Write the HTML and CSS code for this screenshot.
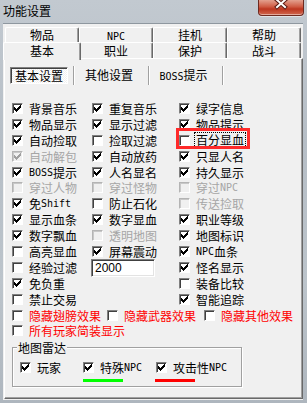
FILE: index.html
```html
<!DOCTYPE html>
<html lang="zh-CN">
<head>
<meta charset="utf-8">
<title>功能设置</title>
<link rel="stylesheet" href="styles.css">
</head>
<body>
<div class="win">
  <div class="titlebar">
    <span class="title">功能设置</span>
    <div class="close">
      <svg width="46" height="16" viewBox="0 0 46 16">
        <path d="M19 1 L27 8 M27 1 L19 8" stroke="#5a1a12" stroke-width="4" stroke-linecap="square" fill="none"/>
        <path d="M19 1 L27 8 M27 1 L19 8" stroke="#ffffff" stroke-width="2" stroke-linecap="square" fill="none"/>
      </svg>
    </div>
  </div>
  <div class="client">
    <div class="tabs">
      <div class="tabrow r1">
        <div class="tab">物品</div>
        <div class="tab"><span class="en">NPC</span></div>
        <div class="tab">挂机</div>
        <div class="tab">帮助</div>
      </div>
      <div class="tabrow r2">
        <div class="tab sel">基本</div>
        <div class="tab">职业</div>
        <div class="tab">保护</div>
        <div class="tab">战斗</div>
      </div>
    </div>
    <div class="panel">
      <div class="subtabs">
        <div class="stab on">基本设置</div><i class="sep"></i>
        <div class="stab w2">其他设置</div><i class="sep"></i>
        <div class="stab w3"><span class="en">BOSS</span>提示</div><i class="sep"></i>
      </div>
      <div class="grid">
        <div class="item on"><span class="box"></span>背景音乐</div>
        <div class="item on"><span class="box"></span>重复音乐</div>
        <div class="item on"><span class="box"></span>绿字信息</div>

        <div class="item on"><span class="box"></span>物品显示</div>
        <div class="item on"><span class="box"></span>显示过滤</div>
        <div class="item on"><span class="box"></span>物品提示</div>

        <div class="item on"><span class="box"></span>自动捡取</div>
        <div class="item"><span class="box"></span>捡取过滤</div>
        <div class="item"><span class="box"></span><span class="focus">百分显血</span></div>

        <div class="item on dis"><span class="box"></span>自动解包</div>
        <div class="item on"><span class="box"></span>自动放药</div>
        <div class="item on"><span class="box"></span>只显人名</div>

        <div class="item on"><span class="box"></span><span class="en">BOSS</span>提示</div>
        <div class="item on"><span class="box"></span>人名显名</div>
        <div class="item on"><span class="box"></span>持久显示</div>

        <div class="item dis"><span class="box"></span>穿过人物</div>
        <div class="item dis"><span class="box"></span>穿过怪物</div>
        <div class="item dis"><span class="box"></span>穿过<span class="en">NPC</span></div>

        <div class="item on"><span class="box"></span>免<span class="en">Shift</span></div>
        <div class="item"><span class="box"></span>防止石化</div>
        <div class="item dis"><span class="box"></span>传送捡取</div>

        <div class="item on"><span class="box"></span>显示血条</div>
        <div class="item on"><span class="box"></span>数字显血</div>
        <div class="item on"><span class="box"></span>职业等级</div>

        <div class="item on"><span class="box"></span>数字飘血</div>
        <div class="item dis"><span class="box"></span>透明地图</div>
        <div class="item on"><span class="box"></span>地图标识</div>

        <div class="item"><span class="box"></span>高亮显血</div>
        <div class="item on"><span class="box"></span>屏幕震动</div>
        <div class="item on"><span class="box"></span><span class="en">NPC</span>血条</div>

        <div class="item"><span class="box"></span>经验过滤</div>
        <div class="cell"><div class="edit">2000</div></div>
        <div class="item on"><span class="box"></span>怪名显示</div>

        <div class="item on"><span class="box"></span>免负重</div>
        <div class="cell"></div>
        <div class="item"><span class="box"></span>装备比较</div>

        <div class="item"><span class="box"></span>禁止交易</div>
        <div class="cell"></div>
        <div class="item on"><span class="box"></span>智能追踪</div>
      </div>
      <div class="line effects">
        <div class="item red w95"><span class="box"></span>隐藏翅膀效果</div>
        <div class="item red w97"><span class="box"></span>隐藏武器效果</div>
        <div class="item red"><span class="box"></span>隐藏其他效果</div>
      </div>
      <div class="line">
        <div class="item red"><span class="box"></span>所有玩家简装显示</div>
      </div>
      <fieldset class="radar">
        <legend>地图雷达</legend>
        <div class="ritems">
          <div class="ritem w63">
            <div class="item on"><span class="box"></span>玩家</div>
          </div>
          <div class="ritem w73">
            <div class="item on"><span class="box"></span>特殊<span class="en">NPC</span></div>
            <div class="bar green"></div>
          </div>
          <div class="ritem">
            <div class="item on"><span class="box"></span>攻击性<span class="en">NPC</span></div>
            <div class="bar redbar"></div>
          </div>
        </div>
      </fieldset>
    </div>
  </div>
</div>
<div class="mark"></div>
</body>
</html>
```

FILE: styles.css
```css
* { box-sizing: border-box; }
html, body { margin: 0; padding: 0; }
body {
  width: 307px;
  height: 403px;
  overflow: hidden;
  position: relative;
  background: linear-gradient(180deg, #c2c9d0 0%, #b6bec6 35%, #bcc4cb 70%, #aeb6be 100%);
  font-family: "Noto Sans CJK SC", sans-serif;
  font-size: 12px;
  color: #000;
}
.en { font-family: "DejaVu Sans Mono", "Liberation Mono", monospace; font-size: 10px; }

.titlebar {
  height: 23px;
  display: flex;
  justify-content: space-between;
  align-items: flex-start;
  padding-left: 3px;
}
.title { line-height: 19px; padding-top: 1px; }
.close {
  width: 46px;
  height: 16px;
  margin-right: 3px;
  border: 1px solid #6e2a20;
  border-top: none;
  border-radius: 0 0 4px 4px;
  background: linear-gradient(180deg, #e3a08e 0%, #cf5a43 45%, #bd3620 60%, #d0684f 100%);
  box-shadow: inset 0 -1px 0 rgba(255,255,255,0.45), 0 1px 0 rgba(255,255,255,0.5);
}
.close svg { display: block; margin: -1px 0 0 -1px; }

.client {
  margin-left: 3px;
  width: 300px;
  height: 377px;
  background: #f0f0f0;
  border-top: 1px solid #8e979f;
  padding: 3px 0 0 0;
}
.tabs { padding-left: 2px; }
.tabrow { display: flex; }
.tab {
  width: 74px;
  flex: none;
  text-align: center;
  background: #f0f0f0;
  border-left: 1px solid #ffffff;
  border-top: 1px solid #ffffff;
  border-right: 1px solid #696969;
  box-shadow: inset -1px 0 0 #a0a0a0;
  border-radius: 2px 2px 0 0;
}
.r1 .tab { height: 15px; line-height: 13px; }
.r2 .tab { height: 16px; line-height: 15px; }
.tab.sel {
  position: relative;
  z-index: 2;
  width: 78px;
  height: 18px;
  margin: 0 -2px -2px -2px;
  line-height: 15px;
}

.panel {
  margin-left: 1px;
  width: 299px;
  height: 341px;
  border-left: 1px solid #ffffff;
  border-top: 1px solid #ffffff;
  border-right: 1px solid #696969;
  border-bottom: 1px solid #696969;
  box-shadow: inset -1px -1px 0 #a0a0a0;
  background: #f0f0f0;
}

.subtabs {
  display: flex;
  align-items: flex-start;
  height: 19px;
  margin-top: 7px;
  padding-left: 5px;
}
.stab { text-align: center; line-height: 15px; height: 17px; margin-top: 1px; }
.stab.on {
  width: 58px;
  border: 1px solid;
  border-color: #808080 #ffffff #ffffff #808080;
  box-shadow: inset 1px 1px 0 #404040;
  background-color: #ffffff;
  background-image: repeating-conic-gradient(#f0f0f0 0 25%, #ffffff 0 50%);
  background-size: 2px 2px;
}
.stab.w2 { width: 68px; }
.stab.w3 { width: 67px; }
.sep {
  width: 2px;
  height: 19px;
  border-left: 1px solid #a0a0a0;
  border-right: 1px solid #ffffff;
  margin-left: 5px;
}
.sep + .stab { margin-left: 0; }

.grid {
  margin-top: 15.5px;
  padding-left: 7px;
  display: grid;
  grid-template-columns: 80px 87px 1fr;
  grid-auto-rows: 15.9px;
}
.item {
  display: flex;
  align-items: center;
  height: 15.9px;
  line-height: 15px;
  white-space: nowrap;
}
.item.dis { color: #a6a6a6; }
.item.red { color: #ff0000; }
.box {
  flex: none;
  position: relative;
  width: 11px;
  height: 11px;
  margin-right: 6px;
  background: #ffffff;
  border: 1px solid;
  border-color: #808080 #ffffff #ffffff #808080;
  box-shadow: inset 1px 1px 0 #404040;
  color: #000;
}
.item.dis .box {
  background: #f0f0f0;
  border-color: #b4b4b4 #ffffff #ffffff #b4b4b4;
  box-shadow: inset 1px 1px 0 #c8c8c8;
  color: #a0a0a0;
}
.item.on .box::after {
  content: "";
  position: absolute;
  left: 1px;
  top: 1px;
  width: 1px;
  height: 1px;
  box-shadow:
    6px 0 0 currentColor,
    5px 1px 0 currentColor, 6px 1px 0 currentColor,
    0 2px 0 currentColor, 4px 2px 0 currentColor, 5px 2px 0 currentColor, 6px 2px 0 currentColor,
    0 3px 0 currentColor, 1px 3px 0 currentColor, 3px 3px 0 currentColor, 4px 3px 0 currentColor, 5px 3px 0 currentColor,
    0 4px 0 currentColor, 1px 4px 0 currentColor, 2px 4px 0 currentColor, 3px 4px 0 currentColor, 4px 4px 0 currentColor,
    1px 5px 0 currentColor, 2px 5px 0 currentColor, 3px 5px 0 currentColor,
    2px 6px 0 currentColor;
}
.focus {
  display: inline-block;
  line-height: 14px;
  padding: 0 1px;
  margin-left: -2px;
  border: 1px dotted #000;
}
.edit {
  margin: -0.5px 0 0 -1px;
  width: 64px;
  height: 18px;
  background: #ffffff;
  border: 1px solid;
  border-color: #808080 #ffffff #ffffff #808080;
  box-shadow: inset 1px 1px 0 #404040, inset -1px -1px 0 #e3e3e3;
  font-family: "Liberation Sans", sans-serif;
  font-size: 12px;
  line-height: 16px;
  padding-left: 3px;
}

.line { display: flex; padding-left: 7px; }
.w95 { width: 95px; }
.w97 { width: 97px; }

.radar {
  margin: 1px 0 0 7px;
  width: 230px;
  border: 1px solid #a0a0a0;
  box-shadow: inset 1px 1px 0 #ffffff, 1px 1px 0 #ffffff;
  padding: 4px;
  min-width: 0;
}
.radar legend {
  padding: 0 1px;
  line-height: 16px;
  background: #f0f0f0;
}
.ritems { display: flex; padding-left: 3px; }
.ritem { display: flex; flex-direction: column; }
.w63 { width: 63px; }
.w73 { width: 73px; }
.ritem .item { height: 16px; }
.bar { width: 40px; height: 3px; margin-top: 3px; }
.green { background: #00ff00; }
.redbar { background: #ff0000; margin-left: -1px; }

.mark {
  position: absolute;
  left: 176px;
  top: 128px;
  width: 74px;
  height: 21px;
  border: 3px solid #ff2a2a;
}
```
